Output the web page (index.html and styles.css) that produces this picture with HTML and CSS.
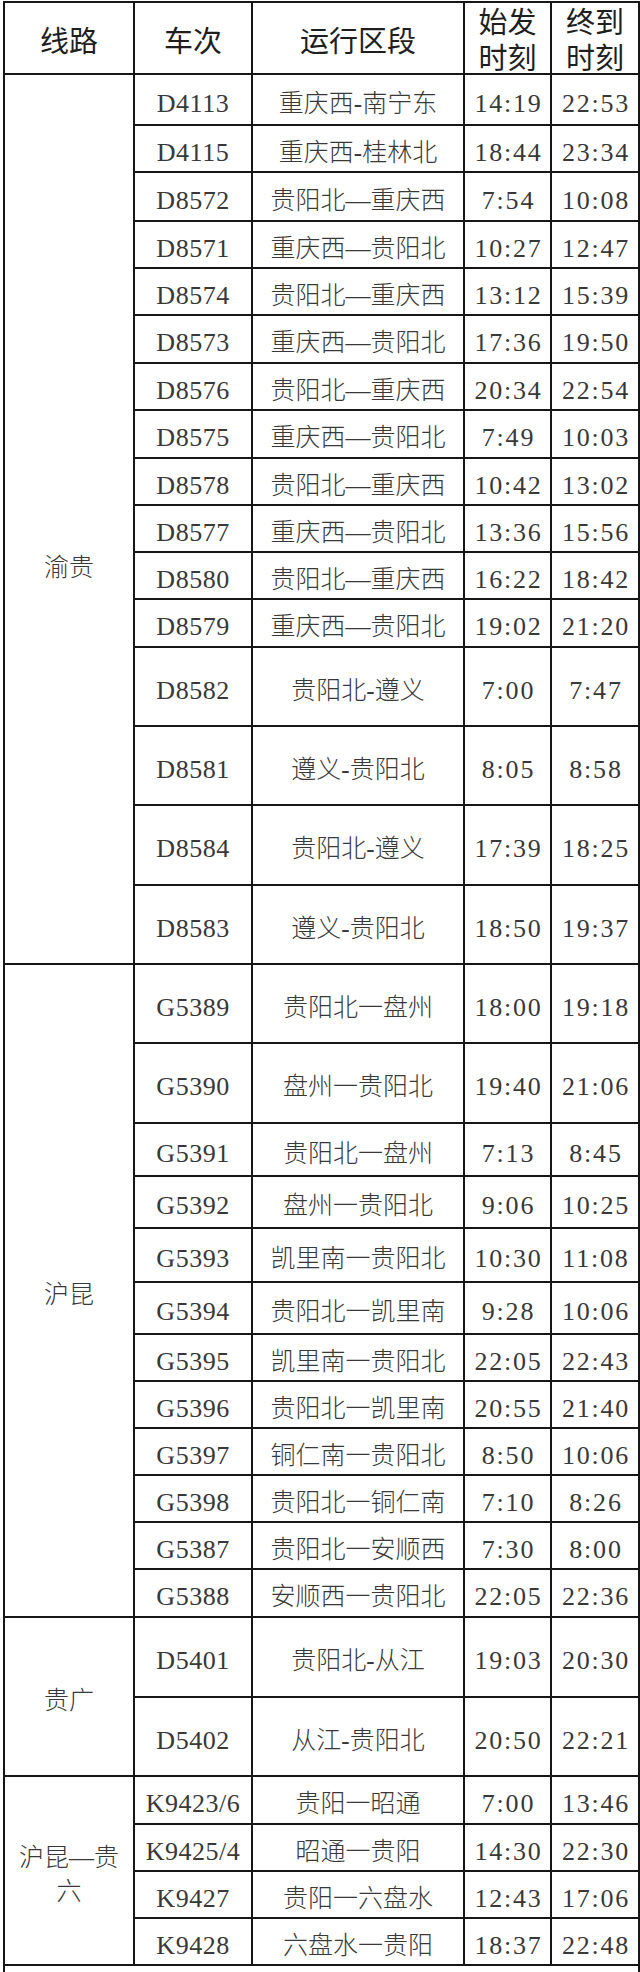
FILE: index.html
```html
<!DOCTYPE html>
<html lang="zh-CN">
<head>
<meta charset="utf-8">
<title>列车时刻表</title>
<link rel="stylesheet" href="styles.css">
</head>
<body>
<div class="sheet">
  <div class="cell hd">线路</div>
  <div class="cell hd">车次</div>
  <div class="cell hd">运行区段</div>
  <div class="cell hd two">始发时刻</div>
  <div class="cell hd two">终到时刻</div>

  <div class="cell grp g1 span16">渝贵</div>
  <div class="cell n">D4113</div><div class="cell">重庆西-南宁东</div><div class="cell t">14:19</div><div class="cell t">22:53</div>
  <div class="cell n">D4115</div><div class="cell">重庆西-桂林北</div><div class="cell t">18:44</div><div class="cell t">23:34</div>
  <div class="cell n">D8572</div><div class="cell">贵阳北—重庆西</div><div class="cell t">7:54</div><div class="cell t">10:08</div>
  <div class="cell n">D8571</div><div class="cell">重庆西—贵阳北</div><div class="cell t">10:27</div><div class="cell t">12:47</div>
  <div class="cell n">D8574</div><div class="cell">贵阳北—重庆西</div><div class="cell t">13:12</div><div class="cell t">15:39</div>
  <div class="cell n">D8573</div><div class="cell">重庆西—贵阳北</div><div class="cell t">17:36</div><div class="cell t">19:50</div>
  <div class="cell n">D8576</div><div class="cell">贵阳北—重庆西</div><div class="cell t">20:34</div><div class="cell t">22:54</div>
  <div class="cell n">D8575</div><div class="cell">重庆西—贵阳北</div><div class="cell t">7:49</div><div class="cell t">10:03</div>
  <div class="cell n">D8578</div><div class="cell">贵阳北—重庆西</div><div class="cell t">10:42</div><div class="cell t">13:02</div>
  <div class="cell n">D8577</div><div class="cell">重庆西—贵阳北</div><div class="cell t">13:36</div><div class="cell t">15:56</div>
  <div class="cell n">D8580</div><div class="cell">贵阳北—重庆西</div><div class="cell t">16:22</div><div class="cell t">18:42</div>
  <div class="cell n">D8579</div><div class="cell">重庆西—贵阳北</div><div class="cell t">19:02</div><div class="cell t">21:20</div>
  <div class="cell n">D8582</div><div class="cell">贵阳北-遵义</div><div class="cell t">7:00</div><div class="cell t">7:47</div>
  <div class="cell n">D8581</div><div class="cell">遵义-贵阳北</div><div class="cell t">8:05</div><div class="cell t">8:58</div>
  <div class="cell n">D8584</div><div class="cell">贵阳北-遵义</div><div class="cell t">17:39</div><div class="cell t">18:25</div>
  <div class="cell n">D8583</div><div class="cell">遵义-贵阳北</div><div class="cell t">18:50</div><div class="cell t">19:37</div>

  <div class="cell grp span12">沪昆</div>
  <div class="cell n">G5389</div><div class="cell">贵阳北一盘州</div><div class="cell t">18:00</div><div class="cell t">19:18</div>
  <div class="cell n">G5390</div><div class="cell">盘州一贵阳北</div><div class="cell t">19:40</div><div class="cell t">21:06</div>
  <div class="cell n">G5391</div><div class="cell">贵阳北一盘州</div><div class="cell t">7:13</div><div class="cell t">8:45</div>
  <div class="cell n">G5392</div><div class="cell">盘州一贵阳北</div><div class="cell t">9:06</div><div class="cell t">10:25</div>
  <div class="cell n">G5393</div><div class="cell">凯里南一贵阳北</div><div class="cell t">10:30</div><div class="cell t">11:08</div>
  <div class="cell n">G5394</div><div class="cell">贵阳北一凯里南</div><div class="cell t">9:28</div><div class="cell t">10:06</div>
  <div class="cell n">G5395</div><div class="cell">凯里南一贵阳北</div><div class="cell t">22:05</div><div class="cell t">22:43</div>
  <div class="cell n">G5396</div><div class="cell">贵阳北一凯里南</div><div class="cell t">20:55</div><div class="cell t">21:40</div>
  <div class="cell n">G5397</div><div class="cell">铜仁南一贵阳北</div><div class="cell t">8:50</div><div class="cell t">10:06</div>
  <div class="cell n">G5398</div><div class="cell">贵阳北一铜仁南</div><div class="cell t">7:10</div><div class="cell t">8:26</div>
  <div class="cell n">G5387</div><div class="cell">贵阳北一安顺西</div><div class="cell t">7:30</div><div class="cell t">8:00</div>
  <div class="cell n">G5388</div><div class="cell">安顺西一贵阳北</div><div class="cell t">22:05</div><div class="cell t">22:36</div>

  <div class="cell grp span2">贵广</div>
  <div class="cell n">D5401</div><div class="cell">贵阳北-从江</div><div class="cell t">19:03</div><div class="cell t">20:30</div>
  <div class="cell n">D5402</div><div class="cell">从江-贵阳北</div><div class="cell t">20:50</div><div class="cell t">22:21</div>

  <div class="cell grp g4 span4">沪昆—贵六</div>
  <div class="cell n">K9423/6</div><div class="cell">贵阳一昭通</div><div class="cell t">7:00</div><div class="cell t">13:46</div>
  <div class="cell n">K9425/4</div><div class="cell">昭通一贵阳</div><div class="cell t">14:30</div><div class="cell t">22:30</div>
  <div class="cell n">K9427</div><div class="cell">贵阳一六盘水</div><div class="cell t">12:43</div><div class="cell t">17:06</div>
  <div class="cell n">K9428</div><div class="cell">六盘水一贵阳</div><div class="cell t">18:37</div><div class="cell t">22:48</div>

  <div class="cell note"></div>
</div>
</body>
</html>
```

FILE: styles.css
```css
html, body {
  margin: 0;
  padding: 0;
  background: #ffffff;
}

body {
  font-family: "Liberation Serif", "Noto Sans CJK SC", serif;
  color: #383838;
}

.sheet {
  margin: 1px 0 0 3px;
  width: 637px;
  box-sizing: border-box;
  display: grid;
  grid-template-columns: 128px 116px 210px 85px 86px;
  grid-template-rows:
    70px
    49px 45px 47px 45px 45px 46px 45px 46px 45px 45px 45px 46px 77px 77px 78px 77px
    77px 78px 51px 50px 52px 50px 45px 45px 45px 45px 45px 46px
    78px 77px
    46px 45px 45px 45px
    40px;
  gap: 2px;
  padding: 2px;
  background: #161616;
}

.cell {
  background: #ffffff;
  display: flex;
  align-items: center;
  justify-content: center;
  text-align: center;
  box-sizing: border-box;
  padding-top: 8px;
  font-size: 25px;
  font-weight: 300;
  line-height: 1.2;
  white-space: nowrap;
}

.n {
  font-size: 26px;
  letter-spacing: 0.5px;
}

.t {
  font-size: 26px;
  letter-spacing: 1.8px;
  padding-left: 2px;
}

.hd {
  font-size: 29px;
  color: #1e1e1e;
  font-weight: 400;
}

.hd.two {
  white-space: normal;
  padding: 6px 12px 0;
  line-height: 36px;
}

.grp {
  white-space: normal;
  padding: 8px 12px 0;
  line-height: 34px;
}

.g1 {
  padding-top: 97px;
}

.span16 { grid-row: span 16; }
.span12 { grid-row: span 12; }
.span4 { grid-row: span 4; }
.span2 { grid-row: span 2; }

.note {
  grid-column: 1 / -1;
}
```
